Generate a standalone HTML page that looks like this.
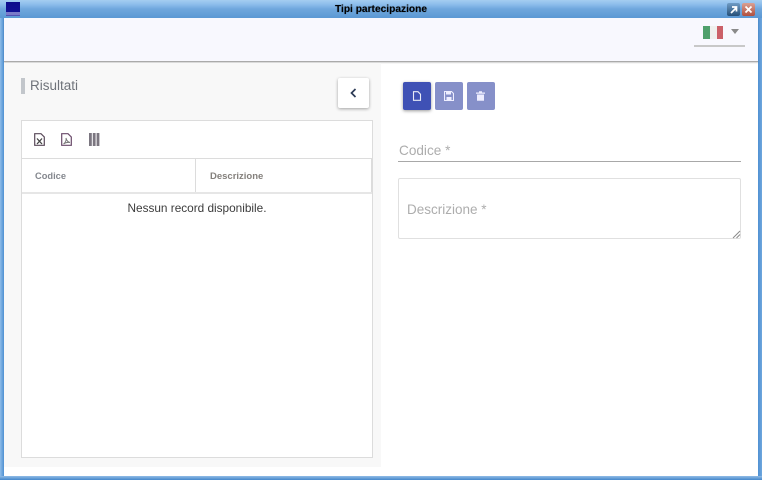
<!DOCTYPE html>
<html><head><meta charset="utf-8">
<style>
html,body{margin:0;padding:0}
body{width:762px;height:480px;position:relative;overflow:hidden;background:#fff;font-family:"Liberation Sans",sans-serif}
div,span{position:absolute;box-sizing:border-box}
svg{position:absolute;display:block}
.t{white-space:nowrap}
</style></head><body>
<!-- window chrome -->
<div style="left:0;top:0;width:762px;height:18px;background:linear-gradient(#a5cdf1 0,#8fbfec 4px,#6fa7dd 9px,#5b98d4 18px)"></div>
<div style="left:0;top:18px;width:4px;height:462px;background:linear-gradient(90deg,#8fbde9,#4f90d2)"></div>
<div style="left:758px;top:18px;width:4px;height:462px;background:linear-gradient(90deg,#4f90d2,#6fa7dd)"></div>
<div style="left:0;top:476px;width:762px;height:4px;background:linear-gradient(#90bce6,#4487cb)"></div>
<!-- title icon -->
<div style="left:6px;top:2px;width:14px;height:14px;background:linear-gradient(#0c0c8c 0,#101094 70%,#5a5ab8 100%)"></div>
<div style="left:6px;top:12px;width:14px;height:3px;background:#7a7ac8"></div>
<div class="t" style="left:231px;top:3px;width:300px;text-align:center;font-size:10.200px;line-height:13px;font-weight:bold;color:#000;text-shadow:0 0 1px rgba(0,0,0,.45)">Tipi partecipazione</div>
<!-- window buttons -->
<div style="left:727px;top:3px;width:13px;height:13px;border-radius:2px;background:linear-gradient(#6f9cc5,#264f78)"></div>
<svg style="left:727px;top:3px" width="13" height="13"><path d="M4 10L9 5M5 4H9.500V8.500" fill="none" stroke="#fff" stroke-width="1.700"/></svg>
<div style="left:742px;top:3px;width:13px;height:13px;border-radius:2px;background:linear-gradient(#d9a093,#b0503f)"></div>
<svg style="left:742px;top:3px" width="13" height="13"><path d="M3.500 3.500L9.500 9.500M9.500 3.500L3.500 9.500" fill="none" stroke="#fff" stroke-width="1.800"/></svg>
<!-- header bar -->
<div style="left:4px;top:18px;width:754px;height:44px;background:#f8f8fe;border-bottom:1px solid #aaaaaa;box-shadow:0 1px 1px rgba(0,0,0,.18)"></div>
<div style="left:703px;top:26px;width:7px;height:13px;background:#4fa06c"></div>
<div style="left:710px;top:26px;width:7px;height:13px;background:#eff0ee"></div>
<div style="left:717px;top:26px;width:6px;height:13px;background:#cb6068"></div>
<svg style="left:731px;top:29px" width="8" height="5"><path d="M0 0H8L4 5Z" fill="#8a8a8a"/></svg>
<div style="left:694px;top:45px;width:51px;height:2px;background:#c8c8c8"></div>
<!-- left panel -->
<div style="left:4px;top:63px;width:377px;height:404px;background:#f8f8f8"></div>
<div style="left:21px;top:78px;width:4px;height:16px;background:#c2c6cb"></div>
<div class="t" style="left:30px;top:77px;font-size:13.500px;line-height:17px;color:#6f737a">Risultati</div>
<div style="left:338px;top:78px;width:31px;height:30px;background:#fff;border-radius:2px;box-shadow:0 1px 3px rgba(0,0,0,.35)"></div>
<svg style="left:349px;top:88px" width="9" height="10"><path d="M6.500 1L2.500 5L6.500 9" fill="none" stroke="#2c3a55" stroke-width="1.700"/></svg>
<!-- table -->
<div style="left:21px;top:120px;width:352px;height:338px;background:#fff;border:1px solid #dcdcdc"></div>
<svg style="left:34px;top:133px" width="11" height="13"><path d="M.700 .700H7L10.300 4V12.300H.700Z" fill="#fff" stroke="#5a4a5a" stroke-width="1.200"/><path d="M3 5.500L8 11M8 5.500L3 11" stroke="#444" stroke-width="1.300"/></svg>
<svg style="left:61px;top:133px" width="11" height="13"><path d="M.700 .700H7L10.300 4V12.300H.700Z" fill="#fff" stroke="#6a4a6a" stroke-width="1.200"/><path d="M2.500 11C4.500 9.500 5.500 7 5 5C5.500 7.500 7 9 9 9.500C6.500 9 4 9.800 2.500 11Z" fill="none" stroke="#777" stroke-width="1"/></svg>
<svg style="left:89px;top:133px" width="11" height="13"><path d="M0 0H2.800V13H0ZM3.800 0H6.600V13H3.800ZM7.600 0H10.400V13H7.600Z" fill="#7b7680"/></svg>
<div style="left:22px;top:158px;width:350px;height:36px;border-top:1px solid #dcdcdc;border-bottom:2px solid #e6e6e6"></div>
<div style="left:195px;top:159px;width:1px;height:33px;background:#dcdcdc"></div>
<div style="left:371px;top:159px;width:1px;height:33px;background:#dcdcdc"></div>
<div class="t" style="left:35px;top:170px;font-size:9.300px;line-height:13px;font-weight:bold;color:#84878e">Codice</div>
<div class="t" style="left:210px;top:170px;font-size:9.500px;line-height:13px;font-weight:bold;color:#84807c">Descrizione</div>
<div class="t" style="left:22px;top:201px;width:350px;text-align:center;font-size:11.800px;line-height:15px;color:#3c3c3c">Nessun record disponibile.</div>
<!-- action buttons -->
<div style="left:403px;top:82px;width:28px;height:28px;background:#3f51b5;border-radius:2px;box-shadow:0 1px 3px rgba(0,0,0,.4)"></div>
<svg style="left:412px;top:91px" width="10" height="10"><path d="M1.500 .700H6L8.500 3.200V9.300H1.500Z" fill="none" stroke="#e8eaf6" stroke-width="1.100"/></svg>
<div style="left:435px;top:82px;width:28px;height:28px;background:#8690c9;border-radius:2px"></div>
<svg style="left:444px;top:91px" width="10" height="10"><path d="M.500 .500H7.500L9.500 2.500V9.500H.500Z" fill="none" stroke="#eef" stroke-width="1.100"/><path d="M2 1H7V3.500H2Z" fill="#eef"/><path d="M2.500 6H7.500V9H2.500Z" fill="#eef"/></svg>
<div style="left:467px;top:82px;width:28px;height:28px;background:#8690c9;border-radius:2px"></div>
<svg style="left:476px;top:91px" width="9" height="10"><path d="M0 1.500H9V2.700H0ZM3 .300H6V1.500H3ZM1 3.500H8V9.800H1Z" fill="#eef"/></svg>
<!-- form -->
<div class="t" style="left:399px;top:142px;font-size:13.600px;line-height:17px;color:#adadad">Codice *</div>
<div style="left:398px;top:161px;width:343px;height:1px;background:#a8a8a8"></div>
<div style="left:398px;top:178px;width:343px;height:61px;background:#fff;border:1px solid #e0e0e0;border-radius:2px"></div>
<div class="t" style="left:407px;top:201px;font-size:13.500px;line-height:17px;color:#adadad">Descrizione *</div>
<svg style="left:732px;top:230px" width="9" height="9"><path d="M1 8L8 1M4.500 8L8 4.500" stroke="#8a8a8a" stroke-width="1"/></svg>
</body></html>
